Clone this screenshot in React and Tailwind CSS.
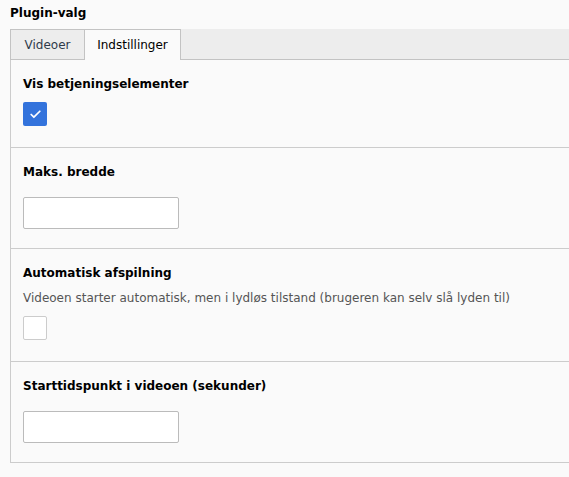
import { Check } from 'lucide-react'

function Section({ label, desc, children, last, pb = 'pb-[19px]' }) {
  return (
    <div className={`px-[12px] pt-[17px] ${pb} ${last ? '' : 'border-b border-[#cccccc]'}`}>
      <p className="font-bold text-[12px] leading-[14px] text-[#000]">{label}</p>
      {desc && <p className="mt-[11px] text-[12px] leading-[14px] text-[#555]">{desc}</p>}
      {children}
    </div>
  )
}

export default function App() {
  return (
    <div className="min-h-[477px] bg-[#fafafa] pl-[10px] pt-[6px] font-['DejaVu_Sans',Verdana,sans-serif] text-[12px] text-[#333]">
      <h1 className="font-bold text-[12px] leading-[14px] text-[#000]">Plugin-valg</h1>

      <div className="mt-[9px] flex h-[31px] bg-[#ededed] border-b border-[#c3c3c3]">
        <div className="flex w-[74px] items-center justify-center border-l border-t border-[#c3c3c3] text-[#2f3b4b]">Videoer</div>
        <div className="-mb-px flex w-[97px] items-center justify-center border border-b-0 border-[#c3c3c3] bg-[#fafafa] text-[#000]">Indstillinger</div>
      </div>

      <div className="border-l border-b border-[#cccccc]">
        <Section label="Vis betjeningselementer" pb="pb-[21px]">
          <div className="mt-[11px] flex h-[24px] w-[24px] items-center justify-center rounded-[2px] bg-[#3373dc]">
            <Check size={13} strokeWidth={3.2} className="text-white" />
          </div>
        </Section>
        <Section label="Maks. bredde">
          <div className="mt-[18px] h-[32px] w-[156px] rounded-[2px] border border-[#bbbbbb] bg-white" />
        </Section>
        <Section label="Automatisk afspilning" pb="pb-[21px]" desc="Videoen starter automatisk, men i lydløs tilstand (brugeren kan selv slå lyden til)">
          <div className="mt-[11px] h-[24px] w-[24px] rounded-[2px] border border-[#cccccc] bg-white" />
        </Section>
        <Section label="Starttidspunkt i videoen (sekunder)" last>
          <div className="mt-[18px] h-[32px] w-[156px] rounded-[2px] border border-[#bbbbbb] bg-white" />
        </Section>
      </div>
    </div>
  )
}
